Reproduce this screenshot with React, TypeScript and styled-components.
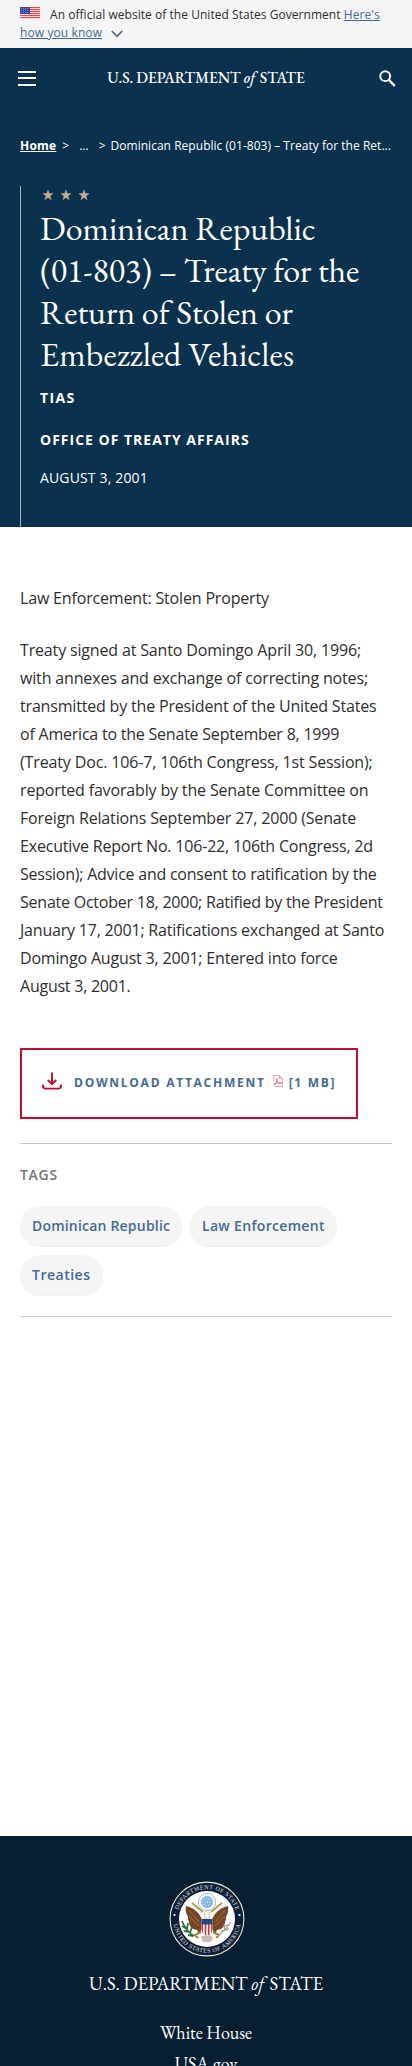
import React from 'react';
import styled, { createGlobalStyle } from 'styled-components';

const Global = createGlobalStyle`
  *, *::before, *::after { box-sizing: border-box; }
  body { margin: 0; background: #fff; font-family: "Open Sans", sans-serif; color: #2e2e2e; }
  a { color: inherit; text-decoration: none; }
  svg { display: block; flex: none; }
`;

const Page = styled.div`
  width: 100%;
  height: 2066px;
  overflow: hidden;
  display: flex;
  flex-direction: column;
`;

const Banner = styled.div`
  height: 48px;
  flex: none;
  background: #f5f5f5;
  padding: 6px 20px 0;
  font-size: 12px;
  line-height: 18px;
`;
const BannerLine = styled.div`
  display: flex;
  align-items: center;
  height: 18px;
  white-space: pre;
`;
const BannerText = styled.span`
  margin-left: 10px;
  letter-spacing: 0.04px;
`;
const BannerLink = styled.a`
  color: #436b95;
  text-decoration: underline;
  letter-spacing: 0.1px;
`;

const Masthead = styled.header`
  flex: none;
  height: 479px;
  background: #0a314d;
  color: #fff;
`;
const NavBar = styled.div`
  height: 60px;
  padding: 0 16px 0 18px;
  display: flex;
  align-items: center;
  justify-content: space-between;
`;
const Burger = styled.button`
  width: 18px;
  height: 15px;
  padding: 0;
  border: 0;
  background: none;
  display: flex;
  flex-direction: column;
  justify-content: space-between;
  span { height: 2px; background: #fff; }
`;
const Crumbs = styled.nav`
  margin: 28px 20px 0;
  height: 20px;
  display: flex;
  font-size: 12px;
  line-height: 20px;
  white-space: nowrap;
  a { font-weight: 700; text-decoration: underline; letter-spacing: 0.2px; }
`;
const Crumb = styled.span<{ $left: number; $spacing?: number }>`
  margin-left: ${p => p.$left}px;
  letter-spacing: ${p => p.$spacing ?? 0}px;
`;
const Hero = styled.section`
  margin: 30px 20px 0;
  height: 341px;
  border-left: 1px solid #a9b6ae;
  padding: 4px 0 0 19px;
`;
const Stars = styled.div`
  display: flex;
  gap: 8px;
  padding-left: 3px;
  height: 17px;
`;
const Title = styled.h1`
  margin: 0;
  font: 400 34px/42px "EB Garamond", "Liberation Serif", serif;
`;
const TitleLine = styled.span<{ $spacing: number }>`
  display: block;
  white-space: nowrap;
  letter-spacing: ${p => p.$spacing}px;
`;
const Meta = styled.div<{ $top: number; $bold?: boolean; $spacing: number }>`
  margin-top: ${p => p.$top}px;
  font-size: 14px;
  line-height: 20px;
  font-weight: ${p => (p.$bold ? 700 : 400)};
  letter-spacing: ${p => p.$spacing}px;
  text-transform: uppercase;
`;

const Main = styled.main`
  flex: none;
  height: 1309px;
  padding: 57px 20px 0;
`;
const Copy = styled.p`
  margin: 0 0 24px;
  font-size: 16px;
  line-height: 28px;
  white-space: nowrap;
`;
const CopyLine = styled.span<{ $spacing: number }>`
  display: block;
  letter-spacing: ${p => p.$spacing}px;
`;
const Download = styled.a`
  margin-top: 48px;
  width: 338px;
  height: 71px;
  border: 2px solid #c10c2e;
  display: flex;
  align-items: center;
  padding: 0 0 2px 20px;
  color: #436b95;
  font-size: 12px;
  font-weight: 700;
  white-space: nowrap;
`;
const DownloadLabel = styled.span<{ $left: number; $spacing: number }>`
  margin-left: ${p => p.$left}px;
  letter-spacing: ${p => p.$spacing}px;
`;
const TagSection = styled.section`
  margin-top: 24px;
  height: 174px;
  border-top: 1px solid #c3c9cc;
  border-bottom: 1px solid #c3c9cc;
`;
const TagHeading = styled.h2`
  margin: 21px 0 0;
  font-size: 14px;
  line-height: 20px;
  font-weight: 600;
  letter-spacing: 0.7px;
  color: #757575;
`;
const TagList = styled.div`
  margin-top: 21px;
  display: flex;
  flex-wrap: wrap;
  gap: 9px 8px;
`;
const Tag = styled.a<{ $width: number; $spacing: number }>`
  width: ${p => p.$width}px;
  height: 40px;
  border-radius: 20px;
  background: #f5f5f5;
  box-shadow: 0 1px 1px rgba(0, 0, 0, 0.07);
  color: #436b95;
  font-size: 14px;
  font-weight: 600;
  letter-spacing: ${p => p.$spacing}px;
  display: flex;
  align-items: center;
  padding: 0 0 2px 12px;
  white-space: nowrap;
`;

const Footer = styled.footer`
  flex: 1;
  background: #071f33;
  color: #fff;
  display: flex;
  flex-direction: column;
  align-items: center;
  padding-top: 45px;
`;
const Wordmark = styled.div<{ $size: number; $weight: number }>`
  font: ${p => p.$weight} ${p => p.$size}px/28px "EB Garamond", "Liberation Serif", serif;
  letter-spacing: -0.07px;
  white-space: nowrap;
  i { margin-right: 0.09em; }
`;
const HeaderMark = styled(Wordmark)`
  margin-right: 3px;
`;
const FooterMark = styled(Wordmark)`
  margin-top: 13px;
`;
const FooterLinks = styled.div`
  margin-top: 19px;
  display: flex;
  flex-direction: column;
  align-items: center;
  font: 400 18px/31px "EB Garamond", "Liberation Serif", serif;
`;

const Flag = () => (
  <svg width="20" height="12" viewBox="0 0 20 12" style={{ marginTop: -4 }}>
    <rect width="20" height="12" fill="#fff" />
    {[0, 2, 4, 6, 8, 10].map(y => (
      <rect key={y} y={y} width="20" height="1.2" fill="#e0474b" />
    ))}
    <rect width="10" height="7" fill="#3b479b" />
    {[1, 3, 5].map(y =>
      [1, 3, 5, 7].map(x => <rect key={`${x}-${y}`} x={x} y={y} width="0.8" height="0.8" fill="#a9aede" />)
    )}
  </svg>
);

const Star = () => (
  <svg width="10" height="10" viewBox="0 0 10 10">
    <path d="M5 0l1.25 3.6H10L7 5.9 8.1 9.7 5 7.4 1.9 9.7 3 5.9 0 3.6h3.75z" fill="#c8ab8d" stroke="#c8ab8d" strokeWidth="0.5" />
  </svg>
);

const SearchIcon = () => (
  <svg width="17" height="17" viewBox="0 0 17 17" fill="none" stroke="#fff">
    <circle cx="6.2" cy="6.2" r="4.9" strokeWidth="2" />
    <path d="M9.8 9.8L15.8 15.8" strokeWidth="2.4" />
  </svg>
);

const Chevron = () => (
  <svg width="12" height="8" viewBox="0 0 12 8" fill="none" stroke="#436b95" strokeWidth="1.7" style={{ marginLeft: 9, marginTop: 1 }}>
    <path d="M.8 1L6 6.3 11.2 1" />
  </svg>
);

const DownloadIcon = () => (
  <svg width="20" height="18" viewBox="0 0 20 18" fill="none" stroke="#c10c2e" strokeWidth="1.9" style={{ marginTop: -3 }}>
    <path d="M10 .5v11.500M5.800 8L10 12.2 14.2 8" />
    <path d="M.9 12.500v1.300q0 2.800 2.800 2.800h12.600q2.800 0 2.800-2.800v-1.300" />
  </svg>
);

const PdfIcon = () => (
  <svg width="10" height="12" viewBox="0 0 10 12" fill="none" stroke="#e08a94" strokeWidth="0.8" style={{ marginLeft: 7.5, marginTop: -3 }}>
    <path d="M.5 6V.5H6.5L9.5 3.5V11.5H1.5" />
    <path d="M6.5.5v3h3" />
    <path d="M.6 9.8C3 9 4.6 5.5 4 3.4 3.2 5.6 5.6 8.6 8.6 8.2 6 7.4 2.4 8.2.6 9.8z" stroke="#d65765" />
  </svg>
);

const Seal = () => (
  <svg width="76" height="76" viewBox="0 0 76 76" style={{ marginLeft: 2 }}>
    <defs>
      <path id="sealTop" d="M8.1 38a29.9 29.9 0 0 1 59.8 0" />
      <path id="sealBottom" d="M4.2 38a33.8 33.8 0 0 0 67.6 0" />
      <clipPath id="shield"><path d="M32.5 38h11v10q0 5-5.500 7-5.500-2-5.500-7z" /></clipPath>
    </defs>
    <circle cx="38" cy="38" r="36.900" fill="#0d1d3c" stroke="#efedc9" strokeWidth="1.1" />
    <circle cx="38" cy="38" r="28" fill="#fff" />
    <g fill="#e8e8df" fontFamily="Liberation Serif, serif" fontSize="6">
      <text textLength="76" lengthAdjust="spacing"><textPath href="#sealTop" startOffset="9">DEPARTMENT OF STATE</textPath></text>
      <text textLength="95" lengthAdjust="spacing"><textPath href="#sealBottom" startOffset="5.500">UNITED STATES OF AMERICA</textPath></text>
    </g>
    <circle cx="5.500" cy="34" r="1.1" fill="#fff" />
    <circle cx="70.5" cy="34" r="1.1" fill="#fff" />
    <path d="M23 22l11 9M53 22l-11 9" stroke="#b99445" strokeWidth="1.8" />
    <circle cx="38" cy="21" r="8.7" fill="#f2f6fa" stroke="#97aec1" strokeWidth="0.8" />
    <circle cx="38" cy="21" r="6" fill="#83b5e6" />
    <path d="M34 18h8M33 21h10M34 24h8" stroke="#d5e8f8" strokeWidth="1" strokeDasharray="1 1.5" />
    <path d="M17 25q7 1 13 8l3 5v10l-3 5-2-4-4-1q-4-3-4-7-2-3-1-5-3-5-2-11z" fill="#754526" />
    <path d="M59 25q-7 1-13 8l-3 5v10l3 5 2-4 4-1q4-3 4-7 2-3 1-5 3-5 2-11z" fill="#754526" />
    <path d="M20 29l10 12M20 35l10 10M56 29L46 41M56 35L46 45" stroke="#a3764c" strokeWidth="0.9" />
    <path d="M36 31q2-3 4 0l1 6h-6z" fill="#fff" stroke="#c0a56e" strokeWidth="0.6" />
    <path d="M32 51l-6 3 3 3M44 51l6 3-3 3" fill="none" stroke="#a77b37" strokeWidth="2" />
    <path d="M32 56q6-4 12 0l-2 5h-8z" fill="#c2bfb2" />
    <g clipPath="url(#shield)">
      <rect x="32" y="38" width="12" height="18" fill="#fff" />
      {[32.5, 35.7, 38.9, 42.1].map(x => <rect key={x} x={x} y="42" width="1.6" height="14" fill="#c92f45" />)}
      <rect x="32" y="38" width="12" height="5.500" fill="#28457c" />
    </g>
    <path d="M13 40q4 10 12 15M13 45l5 3M15 50l6 1M19 54l5 1M19 42l-1 6M23 46l-2 6" fill="none" stroke="#2d7442" strokeWidth="1.8" />
    <path d="M48 55q8-5 14-14M54 46l7-3M52 50l8-2M55 43l1 7" stroke="#a6a298" strokeWidth="1.3" fill="none" />
  </svg>
);

const titleLines = [
  { text: 'Dominican Republic', spacing: 0 },
  { text: '(01-803) – Treaty for the', spacing: -0.07 },
  { text: 'Return of Stolen or', spacing: -0.05 },
  { text: 'Embezzled Vehicles', spacing: 0.12 },
];

const treatyLines: [string, number][] = [
  ['Treaty signed at Santo Domingo April 30, 1996;', -0.16],
  ['with annexes and exchange of correcting notes;', -0.16],
  ['transmitted by the President of the United States', -0.18],
  ['of America to the Senate September 8, 1999', -0.22],
  ['(Treaty Doc. 106-7, 106th Congress, 1st Session);', -0.14],
  ['reported favorably by the Senate Committee on', -0.16],
  ['Foreign Relations September 27, 2000 (Senate', -0.15],
  ['Executive Report No. 106-22, 106th Congress, 2d', -0.19],
  ['Session); Advice and consent to ratification by the', -0.24],
  ['Senate October 18, 2000; Ratified by the President', -0.23],
  ['January 17, 2001; Ratifications exchanged at Santo', -0.2],
  ['Domingo August 3, 2001; Entered into force', -0.18],
  ['August 3, 2001.', -0.24],
];

export default function App() {
  return (
    <Page>
      <Global />
      <Banner>
        <BannerLine>
          <Flag />
          <BannerText>An official website of the United States Government </BannerText>
          <BannerLink href="#">Here's</BannerLink>
        </BannerLine>
        <BannerLine>
          <BannerLink href="#">how you know</BannerLink>
          <Chevron />
        </BannerLine>
      </Banner>
      <Masthead>
        <NavBar>
          <Burger aria-label="Menu"><span /><span /><span /></Burger>
          <HeaderMark $size={15.5} $weight={500}>U.S. DEPARTMENT <i>of</i> STATE</HeaderMark>
          <SearchIcon />
        </NavBar>
        <Crumbs>
          <a href="#">Home</a>
          <Crumb $left={6}>&gt;</Crumb>
          <Crumb $left={10}>...</Crumb>
          <Crumb $left={10}>&gt;</Crumb>
          <Crumb $left={5} $spacing={0.03}>Dominican Republic (01-803) – Treaty for the Ret...</Crumb>
        </Crumbs>
        <Hero>
          <Stars><Star /><Star /><Star /></Stars>
          <Title>
            {titleLines.map(l => <TitleLine key={l.text} $spacing={l.spacing}>{l.text}</TitleLine>)}
          </Title>
          <Meta $top={13} $bold $spacing={1.4}>TIAS</Meta>
          <Meta $top={22} $bold $spacing={1}>Office of Treaty Affairs</Meta>
          <Meta $top={18} $spacing={0.15}>August 3, 2001</Meta>
        </Hero>
      </Masthead>
      <Main>
        <Copy><CopyLine $spacing={-0.17}>Law Enforcement: Stolen Property</CopyLine></Copy>
        <Copy>
          {treatyLines.map(([text, spacing]) => <CopyLine key={text} $spacing={spacing}>{text}</CopyLine>)}
        </Copy>
        <Download href="#">
          <DownloadIcon />
          <DownloadLabel $left={12} $spacing={1.75}>DOWNLOAD ATTACHMENT</DownloadLabel>
          <PdfIcon />
          <DownloadLabel $left={5.5} $spacing={1.7}>[1 MB]</DownloadLabel>
        </Download>
        <TagSection>
          <TagHeading>TAGS</TagHeading>
          <TagList>
            <Tag href="#" $width={162} $spacing={0.2}>Dominican Republic</Tag>
            <Tag href="#" $width={147} $spacing={0.32}>Law Enforcement</Tag>
            <Tag href="#" $width={83} $spacing={0.5}>Treaties</Tag>
          </TagList>
        </TagSection>
      </Main>
      <Footer>
        <Seal />
        <FooterMark $size={18.7} $weight={400}>U.S. DEPARTMENT <i>of</i> STATE</FooterMark>
        <FooterLinks>
          <a href="#">White House</a>
          <a href="#">USA.gov</a>
        </FooterLinks>
      </Footer>
    </Page>
  );
}
